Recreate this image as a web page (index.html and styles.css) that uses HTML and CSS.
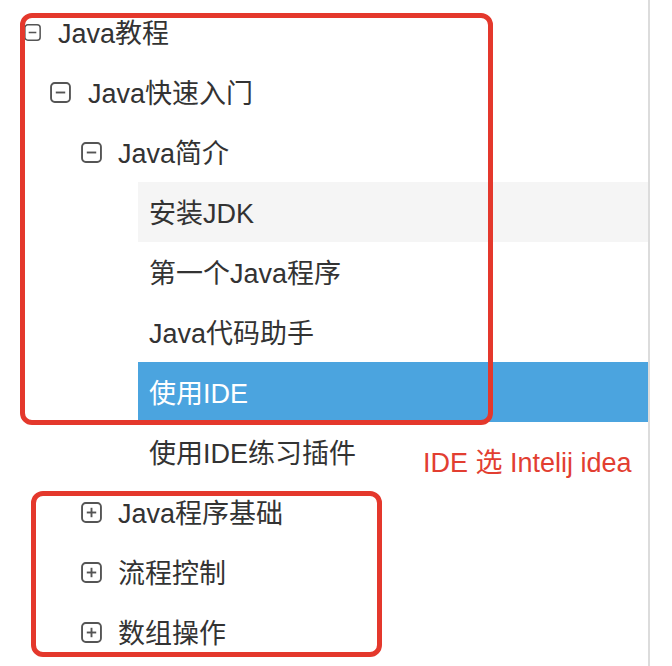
FILE: index.html
```html
<!DOCTYPE html>
<html lang="zh-CN">
<head>
<meta charset="utf-8">
<title>Java教程</title>
<link rel="stylesheet" href="styles.css">
</head>
<body>
<div class="page">
  <ul class="tree">
    <li class="row lv0">
      <svg class="toggle small" viewBox="0 0 20 20"><rect x="1" y="1" width="18" height="18" rx="3.5"/><line x1="5.5" y1="10" x2="14.5" y2="10"/></svg>
      <span class="label">Java教程</span>
    </li>
    <li class="row lv1">
      <svg class="toggle" viewBox="0 0 20 20"><rect x="1" y="1" width="18" height="18" rx="3.5"/><line x1="5.5" y1="10" x2="14.5" y2="10"/></svg>
      <span class="label">Java快速入门</span>
    </li>
    <li class="row lv2">
      <svg class="toggle" viewBox="0 0 20 20"><rect x="1" y="1" width="18" height="18" rx="3.5"/><line x1="5.5" y1="10" x2="14.5" y2="10"/></svg>
      <span class="label">Java简介</span>
    </li>
    <li class="row leaf hover"><span class="label">安装JDK</span></li>
    <li class="row leaf"><span class="label">第一个Java程序</span></li>
    <li class="row leaf"><span class="label">Java代码助手</span></li>
    <li class="row leaf active"><span class="label">使用IDE</span></li>
    <li class="row leaf"><span class="label">使用IDE练习插件</span></li>
    <li class="row lv2">
      <svg class="toggle" viewBox="0 0 20 20"><rect x="1" y="1" width="18" height="18" rx="3.5"/><line x1="5.5" y1="10" x2="14.5" y2="10"/><line x1="10" y1="5.5" x2="10" y2="14.5"/></svg>
      <span class="label">Java程序基础</span>
    </li>
    <li class="row lv2">
      <svg class="toggle" viewBox="0 0 20 20"><rect x="1" y="1" width="18" height="18" rx="3.5"/><line x1="5.5" y1="10" x2="14.5" y2="10"/><line x1="10" y1="5.5" x2="10" y2="14.5"/></svg>
      <span class="label">流程控制</span>
    </li>
    <li class="row lv2">
      <svg class="toggle" viewBox="0 0 20 20"><rect x="1" y="1" width="18" height="18" rx="3.5"/><line x1="5.5" y1="10" x2="14.5" y2="10"/><line x1="10" y1="5.5" x2="10" y2="14.5"/></svg>
      <span class="label">数组操作</span>
    </li>
  </ul>
  <div class="mark mark-top"></div>
  <div class="mark mark-bottom"></div>
  <div class="note">IDE 选 Intelij idea</div>
</div>
</body>
</html>
```
FILE: styles.css
```css
html, body {
  margin: 0;
  padding: 0;
  background: #ffffff;
}

.page {
  position: relative;
  width: 672px;
  height: 666px;
  overflow: hidden;
  font-family: "Liberation Sans", "Noto Sans CJK SC", sans-serif;
}

.tree {
  list-style: none;
  margin: 0;
  padding: 2px 0 0 0;
  width: 648px;
  height: 664px;
  border-right: 2px solid #dcdcdc;
}

.row {
  display: flex;
  align-items: center;
  height: 60px;
  font-size: 27px;
  color: #333333;
  gap: 18px;
}

.label {
  line-height: 1;
  padding-top: 4px;
  white-space: nowrap;
}

.toggle {
  width: 21px;
  height: 21px;
  flex: none;
  fill: none;
  stroke: #555555;
  stroke-width: 1.8;
}

.toggle.small {
  width: 17px;
  height: 17px;
}

.lv0 { padding-left: 24px; gap: 17px; }
.lv1 { padding-left: 50px; gap: 17px; }
.lv2 { padding-left: 81px; gap: 16px; }

.leaf {
  margin-left: 138px;
  padding-left: 11px;
}

.leaf.hover {
  background: #f5f5f5;
}

.leaf.active {
  background: #4ba4df;
  color: #ffffff;
}

.mark {
  position: absolute;
  border: 5px solid #e4382c;
  border-radius: 12px;
  box-sizing: border-box;
}

.mark-top {
  left: 20px;
  top: 13px;
  width: 473px;
  height: 412px;
}

.mark-bottom {
  left: 31px;
  top: 491px;
  width: 351px;
  height: 166px;
}

.note {
  position: absolute;
  left: 423px;
  top: 450px;
  font-size: 27px;
  line-height: 1;
  color: #e23e31;
  white-space: nowrap;
}
```
